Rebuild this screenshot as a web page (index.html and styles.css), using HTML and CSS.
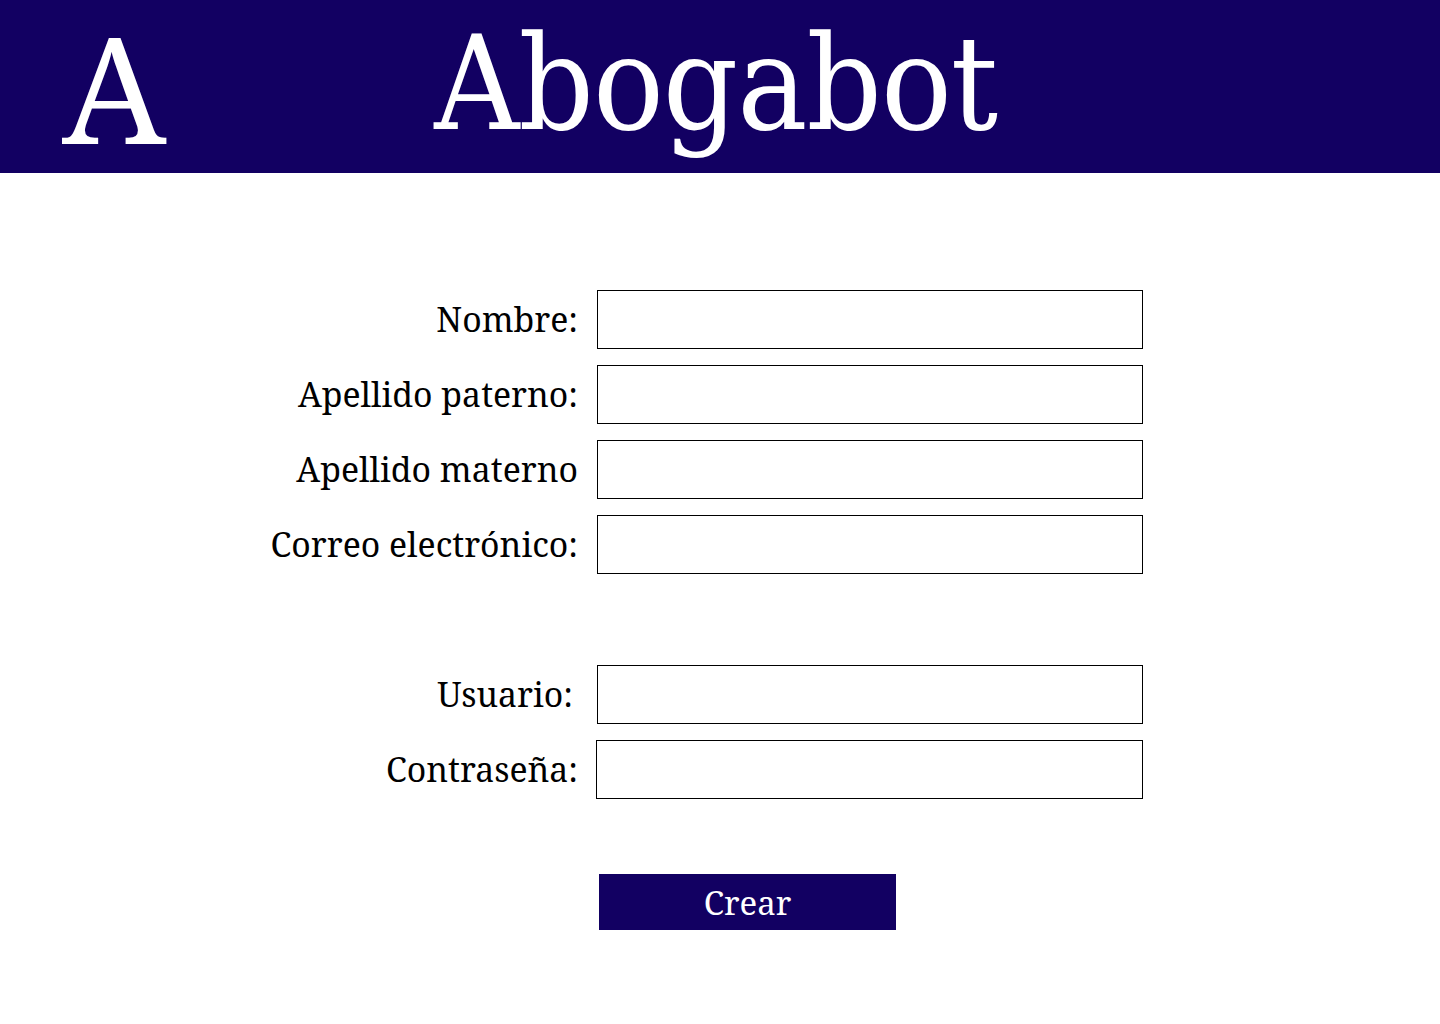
FILE: index.html
```html
<!DOCTYPE html>
<html lang="es">
<head>
<meta charset="utf-8">
<title>Abogabot</title>
<link rel="stylesheet" href="styles.css">
</head>
<body>
<header class="topbar">
  <div class="logo">A</div>
  <h1 class="brand">Abogabot</h1>
</header>
<main class="content">
  <form class="form">
    <div class="group">
      <label class="lbl">Nombre:</label><input class="field" type="text">
      <label class="lbl">Apellido paterno:</label><input class="field" type="text">
      <label class="lbl">Apellido materno</label><input class="field" type="text">
      <label class="lbl">Correo electrónico:</label><input class="field" type="text">
    </div>
    <div class="group group-account">
      <label class="lbl lbl-user">Usuario:</label><input class="field" type="text">
      <label class="lbl">Contraseña:</label><input class="field field-pass" type="password">
    </div>
    <div class="actions">
      <button class="btn" type="button">Crear</button>
    </div>
  </form>
</main>
</body>
</html>
```
FILE: styles.css
```css
* { box-sizing: border-box; }
html, body { margin: 0; padding: 0; background: #ffffff; }
body { font-family: "Noto Serif", "DejaVu Serif", "Liberation Serif", serif; color: #000; }

.topbar {
  height: 173px;
  background: #120062;
  display: flex;
  align-items: flex-start;
  color: #fff;
}
.logo {
  font-size: 148px;
  line-height: 1.15;
  margin-left: 52px;
  padding: 2px 10px 0;
}
.brand {
  margin: 0 0 0 258px;
  font-weight: normal;
  font-family: "DejaVu Serif Condensed", "DejaVu Serif", serif;
  font-stretch: condensed;
  font-size: 131px;
  letter-spacing: -1px;
  line-height: 1;
  padding-top: 18px;
}

.content { padding-top: 117px; }
.form { display: flex; flex-direction: column; }
.group {
  display: grid;
  grid-template-columns: 578px 546px;
  column-gap: 19px;
  row-gap: 16px;
}
.group-account { margin-top: 91px; }
.lbl {
  font-size: 33.8px;
  text-align: right;
  align-self: center;
  line-height: 1;
}
.lbl-user { padding-right: 5px; }
.field {
  height: 59px;
  border: 1px solid #000;
  border-radius: 0;
  background: #fff;
  font: inherit;
  font-size: 24px;
  padding: 0 8px;
}
.field-pass { margin-left: -1px; }
.actions { padding-left: 599px; margin-top: 75px; }
.btn {
  width: 297px;
  height: 56px;
  background: #120062;
  color: #fff;
  border: none;
  border-radius: 0;
  font-family: inherit;
  font-size: 33px;
  padding: 0;
  cursor: pointer;
}
```
